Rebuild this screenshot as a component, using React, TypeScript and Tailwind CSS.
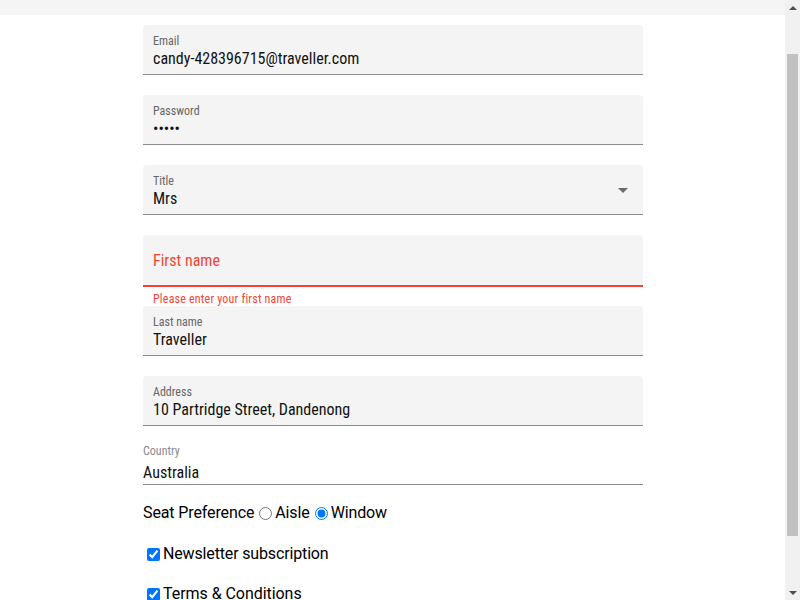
const font = { fontFamily: "Roboto, 'Liberation Sans', sans-serif" };

interface FieldProps {
	label: string;
	value: string;
	select?: boolean;
}

const Field = (props: FieldProps) => {
	return (
		<div className="relative h-[50px] w-[500px] rounded-t-[4px] border-b border-[#8c8c8c] bg-[#f4f4f4] px-[10px] pt-[9px] font-stretch-semi-condensed">
			<div className="text-[12px] leading-[14px] text-[#666666]">{props.label}</div>
			<div className="mt-[1px] text-[16px] leading-[19px] text-[#111]">{props.value}</div>
			{props.select && (
				<div className="absolute right-[15px] top-[23px] h-0 w-0 border-x-[5px] border-t-[5px] border-x-transparent border-t-[#6b6b6b]" />
			)}
		</div>
	);
};

const Scrollbar = () => {
	return (
		<div className="flex h-full w-[15px] flex-col bg-[#f1f1f1]">
			<div className="flex h-[15px] items-center justify-center">
				<div className="h-0 w-0 border-x-[4px] border-b-[4px] border-x-transparent border-b-[#505050]" />
			</div>
			<div className="flex-1 px-[2px] pt-[39px]">
				<div className="h-[482px] w-full bg-[#c1c1c1]" />
			</div>
			<div className="flex h-[15px] items-center justify-center">
				<div className="h-0 w-0 border-x-[4px] border-t-[4px] border-x-transparent border-t-[#505050]" />
			</div>
		</div>
	);
};

export default function App() {
	return (
		<div className="flex h-[600px] overflow-hidden bg-white text-black" style={font}>
			<div className="flex-1 overflow-hidden">
				<div className="h-[15px] bg-[#f5f5f5]" />
				<div className="ml-[143px] mt-[10px] w-[500px]">
					<div className="flex flex-col gap-5">
						<Field label="Email" value="candy-428396715@traveller.com" />
						<Field label="Password" value="•••••" />
						<Field label="Title" value="Mrs" select />
					</div>
					<div className="mt-5 flex h-[52px] w-[500px] items-center rounded-t-[4px] border-b-2 border-[#f44336] bg-[#f4f4f4] px-[10px] pt-[1px] font-stretch-semi-condensed">
						<span className="text-[16px] leading-[19px] text-[#f44336]">First name</span>
					</div>
					<div className="h-[19px] px-[10px] pt-[5px] text-[12px] leading-[14px] tracking-[0.2px] text-[#f44336] font-stretch-semi-condensed">
						Please enter your first name
					</div>
					<div className="flex flex-col gap-5">
						<Field label="Last name" value="Traveller" />
						<Field label="Address" value="10 Partridge Street, Dandenong" />
					</div>
					<div className="mt-[18px] h-[41px] w-[500px] border-b border-[#8c8c8c] font-stretch-semi-condensed">
						<div className="text-[12px] leading-[14px] text-[#8a8a8a]">Country</div>
						<div className="mt-[5px] text-[16px] leading-[19px] text-[#111]">Australia</div>
					</div>
					<div className="mt-[18px] flex h-[20px] items-center text-[16px] tracking-[-0.12px] text-black">
						<span>Seat Preference</span>
						<input type="radio" name="seat" className="ml-[5px] mr-[3px]" />
						<span>Aisle</span>
						<input type="radio" name="seat" defaultChecked className="ml-[5px] mr-[3px]" />
						<span>Window</span>
					</div>
					<div className="mt-[21px] flex h-[20px] items-center text-[16px] tracking-[-0.15px] text-black">
						<input type="checkbox" defaultChecked className="ml-[4px] mr-[3px]" />
						<span>Newsletter subscription</span>
					</div>
					<div className="mt-[20px] flex h-[20px] items-center text-[16px] tracking-[-0.05px] text-black">
						<input type="checkbox" defaultChecked className="ml-[4px] mr-[3px]" />
						<span>Terms &amp; Conditions</span>
					</div>
				</div>
			</div>
			<Scrollbar />
		</div>
	);
}
